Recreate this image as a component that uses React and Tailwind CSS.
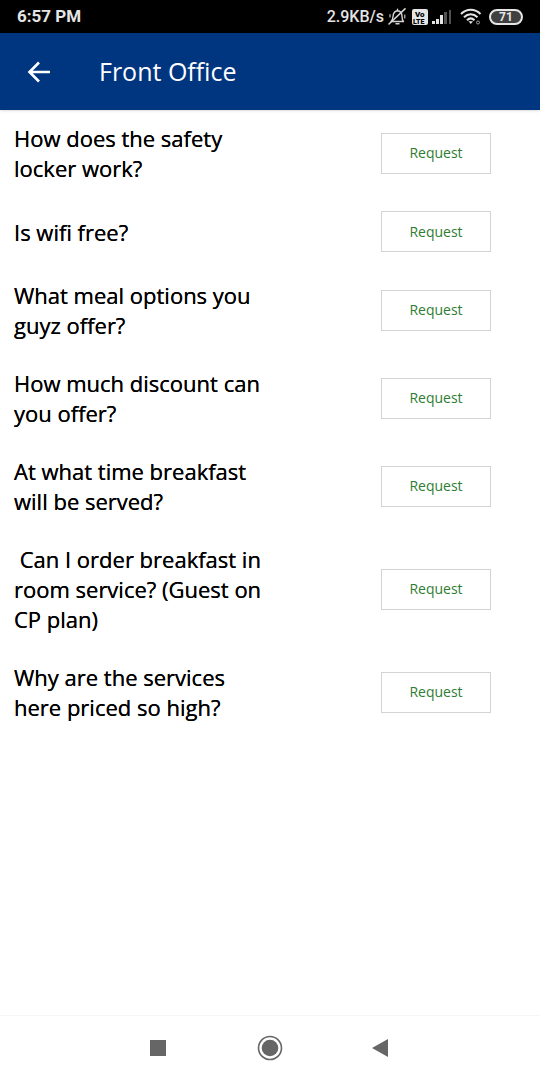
const questions = [
  'How does the safety locker work?',
  'Is wifi free?',
  'What meal options you guyz offer?',
  'How much discount can you offer?',
  'At what time breakfast will be served?',
  ' Can I order breakfast in room service? (Guest on CP plan)',
  'Why are the services here priced so high?',
];

function BellOffIcon() {
  return (
    <svg className="w-[18px] h-[18px]" viewBox="0 0 18 18" fill="none" stroke="#d4d4d4" strokeWidth="1.4" strokeLinecap="round" strokeLinejoin="round">
      <path d="M3 13.5c1.500-1 1.800-2 2-5C5.300 5 7 3 9.500 2.800 12.500 3 14 5 14 8.500c0 3 .5 4 1.500 5H3M9.500 2.800V1.200M8 15.800h3" />
      <path d="M17 .8 1 16" strokeWidth="1.600" />
      <path d="M2 6.500v2.500M16.800 7v3" strokeWidth="1.100" />
    </svg>
  );
}

function VolteIcon() {
  return (
    <svg className="w-4 h-4" viewBox="0 0 16 16" fontFamily="Roboto, sans-serif" fontWeight="900" fill="#000">
      <rect width="16" height="16" rx="2" fill="#e5e5e5" />
      <text x="3" y="7.500" fontSize="8">Vo</text>
      <text x="1" y="14.500" fontSize="7">LTE</text>
    </svg>
  );
}

function SignalIcon() {
  return (
    <svg className="w-5 h-[14px]" viewBox="0 0 20 14" fill="#e5e5e5">
      <rect x="0" y="11" width="3" height="3" />
      <rect x="4" y="9" width="3" height="5" />
      <rect x="8" y="5" width="3" height="9" />
      <rect x="12" y="2" width="3" height="12" fill="#525252" />
      <rect x="17" y="0" width="2" height="14" fill="#525252" />
    </svg>
  );
}

function WifiIcon() {
  return (
    <svg className="w-[22px] h-[17px]" viewBox="0 0 22 17" fill="none" stroke="#e5e5e5" strokeWidth="2">
      <path d="M1 6C6.500 .300 15 .300 20.500 6" />
      <path d="M4 9.200c4-4 9.500-4 13.500 0" />
      <path d="M7 12.200c2.300-2.300 5.200-2.300 7.500 0" />
      <path d="m8.500 13.300 2.250 2.700L13 13.300Z" fill="#e5e5e5" stroke="none" />
      <circle cx="18" cy="14.500" r="1.500" stroke="#a3a3a3" strokeWidth="1" />
    </svg>
  );
}

function StatusBar() {
  return (
    <div className="h-[33px] bg-black text-neutral-200 flex items-center justify-between px-[17px] font-[Roboto,sans-serif]">
      <span className="text-[17px] font-bold">6:57 PM</span>
      <div className="flex items-center">
        <span className="text-base font-medium mr-1">2.9KB/s</span>
        <BellOffIcon />
        <span className="ml-[6px] mr-1"><VolteIcon /></span>
        <SignalIcon />
        <span className="ml-2 mr-[7px]"><WifiIcon /></span>
        <span className="w-[34px] h-4 rounded-full border-2 border-neutral-200 bg-neutral-700 flex items-center justify-center text-xs font-bold">
          71
        </span>
      </div>
    </div>
  );
}

function Header() {
  return (
    <header className="h-[77px] bg-[#003580] text-white flex items-center pl-[27px] shadow-sm">
      <button type="button" aria-label="Back" className="mr-12">
        <svg className="w-6 h-6" viewBox="0 0 24 24" fill="none" stroke="currentColor" strokeWidth="2.600">
          <path d="M23 12H3M12 2.500 2.500 12l9.500 9.500" />
        </svg>
      </button>
      <h1 className="text-[25px]">Front Office</h1>
    </header>
  );
}

function NavBar() {
  return (
    <nav className="h-[65px] border-t border-neutral-100 flex items-center justify-center gap-[87px] text-[#666]">
      <button type="button" aria-label="Recent apps">
        <svg className="w-6 h-6" viewBox="0 0 24 24" fill="currentColor">
          <rect x="4" y="4" width="16" height="16" />
        </svg>
      </button>
      <button type="button" aria-label="Home">
        <svg className="w-[26px] h-[26px]" viewBox="0 0 26 26" fill="currentColor">
          <circle cx="13" cy="13" r="11.500" fill="none" stroke="currentColor" strokeWidth="1.600" />
          <circle cx="13" cy="13" r="8.300" />
        </svg>
      </button>
      <button type="button" aria-label="Back">
        <svg className="w-6 h-6" viewBox="0 0 24 24" fill="currentColor">
          <path d="M18 3v18L2 12Z" />
        </svg>
      </button>
    </nav>
  );
}

export default function App() {
  return (
    <div className="min-h-screen flex flex-col bg-white text-black font-['Open_Sans',sans-serif]">
      <StatusBar />
      <Header />
      <main className="flex-1">
        <ul>
          {questions.map((question) => (
            <li key={question} className="flex items-center justify-between pt-[13px] pb-[15px] pl-[14px] pr-[49px]">
              <p className="flex-1 max-w-[256px] text-[22px] leading-[30px] whitespace-pre-wrap [text-shadow:0_0_0_black]">
                {question}
              </p>
              <button
                type="button"
                className="w-[110px] h-[41px] border border-neutral-300 text-sm text-[#2e7d32]"
              >
                Request
              </button>
            </li>
          ))}
        </ul>
      </main>
      <NavBar />
    </div>
  );
}
